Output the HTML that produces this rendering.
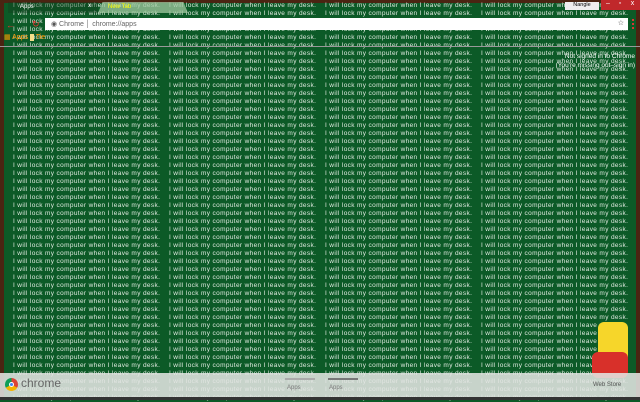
<!DOCTYPE html>
<html><head><meta charset="utf-8"><style>
*{margin:0;padding:0;box-sizing:border-box}
body{width:640px;height:400px;overflow:hidden;background:#0c5a27;position:relative;font-family:"Liberation Sans",sans-serif}
#board{position:absolute;left:0;top:0;width:640px;height:400px;border-left:4px solid #4a2412;border-right:4px solid #4a2412;border-top:3px solid #4a2412}
.col{position:absolute;top:2px;width:152px;overflow:hidden;color:#dfe9df;font-size:6.5px;line-height:8px;white-space:pre;letter-spacing:0.35px}
.tab1{position:absolute;left:8px;top:2px;width:90px;height:11px;background:rgba(20,60,30,.4);color:#fff;font-size:6px;padding:2px 12px}
.tab2{position:absolute;left:98px;top:2px;width:90px;height:11px;background:rgba(160,200,160,.75);color:#ff0;font-size:6px;padding:2px 10px;clip-path:polygon(5% 0,95% 0,100% 100%,0 100%)}
#omni{position:absolute;left:45px;top:18px;width:583px;height:12px;background:#fff;font-size:7px;color:#666;padding:2px 6px}
#sep{position:absolute;left:0;top:46px;width:640px;height:1px;background:#999}
#bottom{position:absolute;left:0;top:373px;width:640px;height:24px;background:rgba(225,228,225,.88)}
#bb{position:absolute;left:0;top:397px;width:640px;height:3px;background:#333}
.win{position:absolute;top:0;height:10px;background:#c0282b;color:#fff;font-size:7px;text-align:center}
</style></head><body>
<div id="board"></div>
<div id="cols"></div>
<script>
var s="";for(var i=0;i<50;i++)s+="I will lock my computer when I leave my desk.\n";
var xs=[13,169,325,481];var h="";xs.forEach(function(x){h+='<div class="col" style="left:'+x+'px">'+s+'</div>'});
document.getElementById('cols').innerHTML=h;
</script>
<div class="tab1">Apps</div>
<div style="position:absolute;left:88px;top:3px;color:#fff;font-size:6px">x</div>
<div class="tab2">New Tab</div>
<div style="position:absolute;left:565px;top:2px;width:34px;height:8px;background:#eee;color:#000;font-size:5.5px;text-align:center">Nangle</div>
<div class="win" style="left:601px;width:14px">–</div>
<div class="win" style="left:615px;width:10px">▫</div>
<div class="win" style="left:625px;width:15px">x</div>
<div style="position:absolute;left:6px;top:20px;color:#e33;font-size:9px">←</div>
<div style="position:absolute;left:32px;top:19px;color:#e33;font-size:9px">↻</div>
<div id="omni"><span style="color:#555">◉</span> Chrome │ chrome://apps<span style="position:absolute;right:4px;top:1px;color:#333">☆</span></div>
<div style="position:absolute;left:632px;top:19px;width:2px;height:10px;border-left:2px dotted #d33"></div>
<div style="position:absolute;left:4px;top:33px;font-size:7px;color:#f90">▦ Apps <span style="background:#f5e08a">&nbsp;&nbsp;</span> Tie</div>
<div id="sep"></div>
<div style="position:absolute;left:535px;top:52px;color:#fff;font-size:6.5px;text-align:right;width:100px;line-height:9px">Not signed in to Chrome<br>(You're missing out–sign in)</div>
<div style="position:absolute;left:598px;top:322px;width:30px;height:40px;background:#f6d62a;border-radius:6px 6px 4px 4px"></div>
<div style="position:absolute;left:592px;top:352px;width:36px;height:26px;background:#d8302a;border-radius:6px"></div>
<div id="bottom">
<div style="position:absolute;left:5px;top:5px;width:13px;height:13px;border-radius:50%;background:conic-gradient(#db4437 0 120deg,#f4b400 0 240deg,#0f9d58 0);"></div>
<div style="position:absolute;left:9px;top:9px;width:5px;height:5px;border-radius:50%;background:#4285f4;border:1px solid #fff"></div>
<div style="position:absolute;left:21px;top:3px;font-size:12px;color:#666">chrome</div>
<div style="position:absolute;left:285px;top:5px;width:30px;height:2px;background:#aaa"></div>
<div style="position:absolute;left:328px;top:5px;width:30px;height:2px;background:#777"></div>
<div style="position:absolute;left:287px;top:12px;font-size:6px;color:#777">Apps</div>
<div style="position:absolute;left:329px;top:12px;font-size:6px;color:#777">Apps</div>
<div style="position:absolute;left:593px;top:9px;font-size:6px;color:#555">Web Store</div>
</div>
<div id="bb"></div>
</body></html>
